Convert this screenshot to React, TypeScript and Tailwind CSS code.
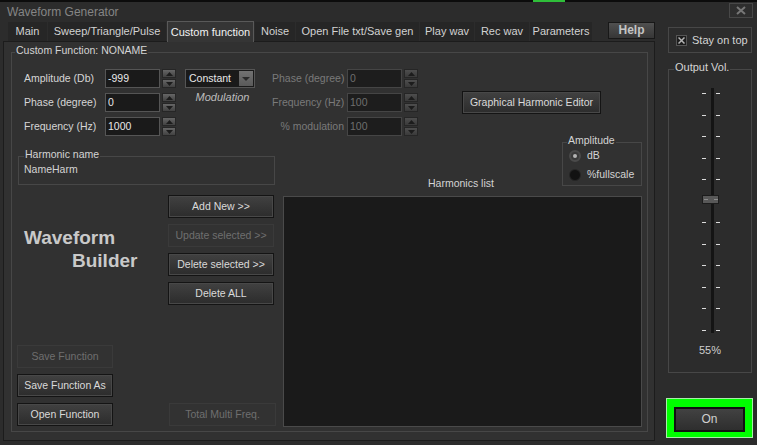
import React from "react";

const tabs = [
  { t: "Main", w: "w-[39px]" },
  { t: "Sweep/Triangle/Pulse", w: "w-[118px]" },
  { t: "Custom function", w: "w-[87px]", on: true },
  { t: "Noise", w: "w-[40px]" },
  { t: "Open File txt/Save gen", w: "w-[123px]" },
  { t: "Play wav", w: "w-[54px]" },
  { t: "Rec wav", w: "w-[54px]" },
  { t: "Parameters", w: "w-[62px]" },
];

const ticks = [15, 37, 58, 80, 101, 144, 166, 187, 209, 230, 252];

const btn =
  "flex h-[23px] items-center justify-center whitespace-nowrap border border-[#141414] bg-linear-to-b from-[#414141] to-[#2c2c2c] text-[#dadada] shadow-[inset_0_0_0_1px_#484848]";
const btnOff =
  "flex h-[23px] items-center justify-center whitespace-nowrap border border-[#3a3a3a] bg-[#323232] text-[#6f6f6f]";

function Spin({ off }: { off?: boolean }) {
  const b = off
    ? "flex h-[9px] items-center justify-center border border-[#262626] bg-linear-to-b from-[#4e4e4e] to-[#3a3a3a]"
    : "flex h-[9px] items-center justify-center border border-[#262626] bg-linear-to-b from-[#666666] to-[#424242]";
  return (
    <div className="ml-[2px] flex h-[19px] w-[14px] flex-col justify-between">
      <div className={b}>
        <svg width="7" height="4" viewBox="0 0 7 4">
          <path d="M0 4L3.5 0L7 4Z" fill="#1c1c1c" />
        </svg>
      </div>
      <div className={b}>
        <svg width="7" height="4" viewBox="0 0 7 4">
          <path d="M0 0L3.5 4L7 0Z" fill="#1c1c1c" />
        </svg>
      </div>
    </div>
  );
}

function Field({ label, v, off, right }: { label: string; v: string; off?: boolean; right?: boolean }) {
  return (
    <div className="flex h-[19px] items-center">
      <div
        className={
          right
            ? "w-[75px] whitespace-nowrap pr-[3px] text-right text-[#7a7a7a]"
            : "w-[81px] whitespace-nowrap text-[#d6d6d6]"
        }
      >
        {label}
      </div>
      <div
        className={
          off
            ? "flex h-[19px] w-[55px] items-center border border-[#454545] bg-[#1d1d1d] pl-[2px] text-[#6e6e6e]"
            : "flex h-[19px] w-[55px] items-center border border-[#555555] bg-[#1a1a1a] pl-[2px] text-[#e8e8e8]"
        }
      >
        {v}
      </div>
      <Spin off={off} />
    </div>
  );
}

function Radio({ on, label }: { on?: boolean; label: string }) {
  return (
    <div className="flex h-[13px] items-center">
      <div
        className={
          on
            ? "flex h-[12px] w-[12px] items-center justify-center rounded-full border-2 border-[#4a4a4a] bg-[#3a3a3a]"
            : "h-[12px] w-[12px] rounded-full border border-[#262626] bg-[#121212]"
        }
      >
        {on && <div className="h-[4px] w-[4px] rounded-full bg-[#b4b4b4]" />}
      </div>
      <span className="ml-[6px]">{label}</span>
    </div>
  );
}

export default function App() {
  return (
    <div className="flex h-[445px] w-[757px] flex-col overflow-hidden bg-[#2c2c2c] font-['Liberation_Sans',Arial,sans-serif] text-[10.5px] leading-[13px] text-[#d4d4d4]">
      <div className="flex h-[2px] bg-[#0c0c0c]">
        <div className="ml-[533px] w-[32px] bg-[#2fbf3a]" />
      </div>
      <div className="flex h-[19px] items-start justify-between">
        <div className="pl-[7px] pt-[3px] text-[12px] leading-[14px] text-[#858585]">Waveform Generator</div>
        <div className="mr-[4px] mt-[1px] flex h-[15px] w-[24px] items-center justify-center border border-[#484848] bg-[#2e2e2e]">
          <svg width="10" height="9" viewBox="0 0 10 9">
            <path d="M1 1L9 8M9 1L1 8" stroke="#777777" strokeWidth="2" />
          </svg>
        </div>
      </div>

      <div className="flex">
        <div className="w-[655px]">
          {/* tab strip */}
          <div className="flex h-[20px] items-end pl-[8px] text-[11px]">
            {tabs.map((tb) =>
              tb.on ? (
                <div
                  key={tb.t}
                  className={"relative z-10 mr-[1px] -mb-[1px] flex h-[21px] items-center justify-center whitespace-nowrap border border-b-0 border-[#595959] bg-[#353535] text-[#f2f2f2] " + tb.w}
                >
                  {tb.t}
                </div>
              ) : (
                <div
                  key={tb.t}
                  className={"mr-[1px] flex h-[19px] items-center justify-center whitespace-nowrap bg-[#262626] text-[#d2d2d2] " + tb.w}
                >
                  {tb.t}
                </div>
              ),
            )}
            <div className="ml-[15px] mb-[2px] flex h-[17px] w-[47px] items-center justify-center self-end border border-[#181818] bg-linear-to-b from-[#505050] to-[#363636] text-[12px] font-bold text-[#c4c4c4]">
              Help
            </div>
          </div>

          {/* main panel */}
          <div className="ml-[3px] h-[400px] w-[652px] border border-[#1c1c1c] bg-[#313131] pl-[7px] pt-[2px]">
            <fieldset className="h-[388px] w-[637px] border border-[#474747]">
              <legend className="ml-[3px] px-[1px] pb-[4px]">Custom Function: NONAME</legend>

              <div className="ml-[12px] mt-[8px] flex items-start">
                <div className="flex flex-col gap-[5px]">
                  <Field label="Amplitude (Db)" v="-999" />
                  <Field label="Phase (degree)" v="0" />
                  <Field label="Frequency (Hz)" v="1000" />
                </div>
                <div className="ml-[9px] w-[70px]">
                  <div className="flex h-[19px] items-center justify-between border border-[#555555] bg-[#1a1a1a] pl-[3px] pr-[1px] text-[#e8e8e8]">
                    <span>Constant</span>
                    <div className="flex h-[15px] w-[14px] items-center justify-center bg-linear-to-b from-[#727272] to-[#5a5a5a]">
                      <svg width="8" height="4" viewBox="0 0 8 4">
                        <path d="M0 0L4 4L8 0Z" fill="#2a2a2a" />
                      </svg>
                    </div>
                  </div>
                  <div className="mt-[3px] pl-[5px] text-center text-[11px] italic text-[#bdbdbd]">Modulation</div>
                </div>
                <div className="ml-[17px] flex flex-col gap-[5px]">
                  <Field label="Phase (degree)" v="0" off right />
                  <Field label="Frequency (Hz)" v="100" off right />
                  <Field label="% modulation" v="100" off right />
                </div>
                <div className={"ml-[44px] mt-[22px] w-[139px] " + btn}>Graphical Harmonic Editor</div>
              </div>

              <div className="-mt-[2px] ml-[6px] flex gap-[7px]">
                <div className="w-[258px]">
                  <fieldset className="mt-[14px] h-[37px] w-[257px] border border-[#474747]">
                    <legend className="ml-[5px] px-[1px] pb-[4px]">Harmonic name</legend>
                    <div className="-mt-[2px] pl-[5px]">NameHarm</div>
                  </fieldset>

                  <div className="mt-[10px] flex">
                    <div className="w-[150px] pl-[6px] pt-[31px] text-[19px] font-bold leading-[23px] text-[#c9c9c9]">
                      <div>Waveform</div>
                      <div className="pl-[48px]">Builder</div>
                    </div>
                    <div className="flex w-[106px] flex-col gap-[6px]">
                      <div className={btn}>Add New &gt;&gt;</div>
                      <div className={btnOff}>Update selected &gt;&gt;</div>
                      <div className={btn}>Delete selected &gt;&gt;</div>
                      <div className={btn}>Delete ALL</div>
                    </div>
                  </div>

                  <div className="-ml-[1px] mt-[40px] flex flex-col gap-[6px]">
                    <div className={"w-[96px] " + btnOff}>Save Function</div>
                    <div className={"w-[96px] " + btn}>Save Function As</div>
                    <div className="flex">
                      <div className={"w-[96px] " + btn}>Open Function</div>
                      <div className={"ml-[56px] w-[107px] " + btnOff}>Total Multi Freq.</div>
                    </div>
                  </div>
                </div>

                <div className="w-[359px]">
                  <div className="flex items-start">
                    <div className="ml-[145px] mt-[43px]">Harmonics list</div>
                    <fieldset className="ml-auto h-[52px] w-[80px] border border-[#474747]">
                      <legend className="ml-[4px] px-[1px] pb-[4px]">Amplitude</legend>
                      <div className="-mt-[2px] flex flex-col gap-[6px] pl-[6px]">
                        <Radio on label="dB" />
                        <Radio label="%fullscale" />
                      </div>
                    </fieldset>
                  </div>
                  <div className="mt-[6px] h-[231px] border border-[#4a4a4a] bg-[#1a1a1a]" />
                </div>
              </div>
            </fieldset>
          </div>
        </div>

        {/* right column */}
        <div className="ml-[13px] flex w-[84px] flex-col">
          <div className="mt-[6px] flex h-[26px] items-center border border-[#474747] pl-[7px]">
            <div className="flex h-[11px] w-[11px] items-center justify-center border border-[#555555] bg-[#1c1c1c]">
              <svg width="7" height="7" viewBox="0 0 7 7">
                <path d="M0.5 0.5L6.5 6.5M6.5 0.5L0.5 6.5" stroke="#b4b4b4" strokeWidth="1.5" />
              </svg>
            </div>
            <span className="ml-[5px] text-[11px]">Stay on top</span>
          </div>

          <fieldset className="mt-[8px] h-[312px] w-[84px] border border-[#474747]">
            <legend className="ml-[5px] px-[1px] pb-[4px] text-[11px]">Output Vol.</legend>
            <svg width="82" height="260" viewBox="0 0 82 260" className="block">
              <rect x="42" y="10" width="3" height="245" fill="#141414" />
              {ticks.map((y) => (
                <g key={y}>
                  <rect x="33" y={y} width="4" height="1" fill="#dcdcdc" />
                  <rect x="47" y={y} width="4" height="1" fill="#dcdcdc" />
                </g>
              ))}
              <rect x="33.5" y="117.5" width="16" height="8" fill="#585858" stroke="#1c1c1c" />
              <rect x="35" y="121" width="4" height="1" fill="#8c8c8c" />
              <rect x="45" y="121" width="4" height="1" fill="#8c8c8c" />
            </svg>
            <div className="mt-[6px] text-center text-[11px] text-[#cfcfcf]">55%</div>
          </fieldset>

          <div className="-ml-[2px] mt-[25px] h-[40px] w-[87px] border border-[#a8eea8] bg-[#00ff00] pl-[7px] pt-[8px]">
            <div className="flex h-[25px] w-[71px] items-center justify-center border-2 border-[#111111] bg-linear-to-b from-[#424242] to-[#2e2e2e] text-[12px] text-[#d0d0d0]">
              On
            </div>
          </div>
        </div>
      </div>
    </div>
  );
}
